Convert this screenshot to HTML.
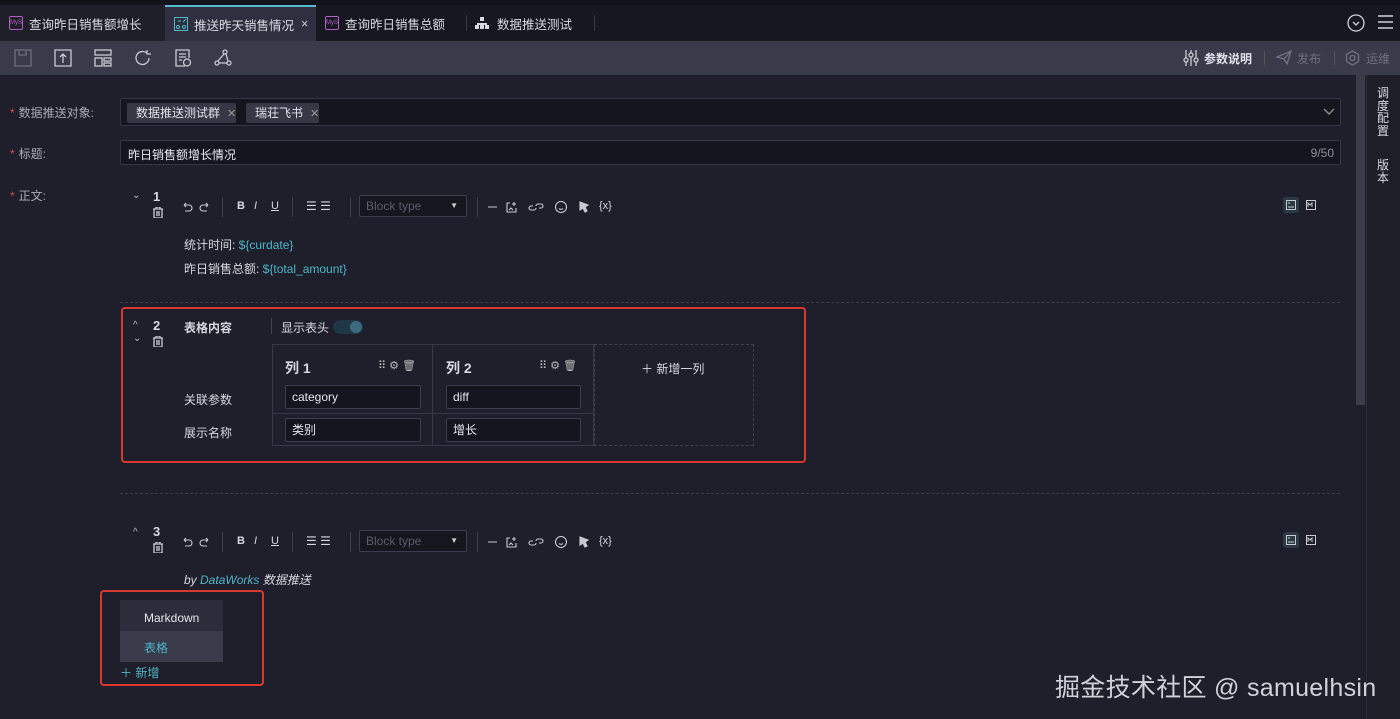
<!DOCTYPE html>
<html><head><meta charset="utf-8"><style>
*{box-sizing:border-box;margin:0;padding:0}
body{width:1400px;height:719px;overflow:hidden;background:#1e1f2b;font-family:"Liberation Sans","Noto Sans CJK SC",sans-serif;color:#d6d8e0;font-size:12px;position:relative}
.a{position:absolute}
.tab{position:absolute;top:5px;height:36px;display:flex;align-items:center;font-size:12.5px;color:#d8dae2;padding-left:9px}
.mys{width:14px;height:14px;border:1px solid #b35dc8;color:#b35dc8;font-size:6px;line-height:12px;text-align:center;margin-right:6px;border-radius:2px}
.lbl{position:absolute;left:10px;color:#a8abb6;font-size:12px}
.lbl b{color:#d9485a;font-weight:normal;margin-right:4px}
.inp{position:absolute;background:#14151d;border:1px solid #33364a;border-radius:2px}
.chip{position:absolute;top:4px;height:20px;background:#363846;color:#e0e2ea;font-size:12px;line-height:20px;padding-left:9px;border-radius:2px}
.chip i{font-style:normal;color:#999;margin-left:7px;font-size:11px}
.icon{position:absolute;stroke:#c8cad2;fill:none;stroke-width:1.3}
.sep{position:absolute;width:1px;height:20px;background:#3c3f4e}
.btype{position:absolute;width:108px;height:22px;border:1px solid #3a3d4e;background:#15161e;color:#5a5d6a;font-size:12px;line-height:20px;padding-left:6px;border-radius:2px}
.cyan{color:#4fb5c8}
.dash{position:absolute;left:120px;width:1220px;border-top:1px dashed #3a3d4b}
.cell{position:absolute;background:#14151d;border:1px solid #3a3d4e;height:24px;line-height:22px;padding-left:6px;color:#e4e6ec;font-size:12px;border-radius:2px}
</style></head><body>
<div class="a" style="left:0;top:0;width:1400px;height:5px;background:#12131a"></div>
<div class="a" style="left:0;top:5px;width:1400px;height:36px;background:#16171f"></div>
<div class="tab" style="left:0;width:165px;background:#1e1f29"><span class="mys">MyS</span>查询昨日销售额增长</div>
<div class="tab" style="left:165px;width:151px;background:#2e3040;border-top:2px solid #5ab8cf"><svg width="14" height="14" style="margin-right:6px" viewBox="0 0 14 14" fill="none" stroke="#4fb5c8"><rect x="0.5" y="0.5" width="13" height="13"/><circle cx="4" cy="10" r="1.5"/><circle cx="10" cy="10" r="1.5"/><path d="M4 4h3M9 5l3-3"/></svg>推送昨天销售情况<span style="margin-left:7px;color:#ccc">×</span></div>
<div class="tab" style="left:316px;width:150px"><span class="mys">MyS</span>查询昨日销售总额</div>
<div class="a" style="left:466px;top:15px;width:1px;height:16px;background:#3a3c48"></div>
<div class="tab" style="left:466px;width:128px"><svg width="14" height="13" style="margin-right:8px" viewBox="0 0 14 13" fill="#d8dae2"><rect x="5" y="0" width="4" height="4"/><rect x="0" y="8" width="4" height="4"/><rect x="5" y="8" width="4" height="4"/><rect x="10" y="8" width="4" height="4"/><path d="M7 4v2M2 6h10v2H2z"/></svg>数据推送测试</div>
<div class="a" style="left:594px;top:15px;width:1px;height:16px;background:#3a3c48"></div>
<svg class="a" style="left:1347px;top:14px" width="18" height="18" viewBox="0 0 18 18" fill="none" stroke="#d0d2da" stroke-width="1.3"><circle cx="9" cy="9" r="8"/><path d="M6 8l3 3 3-3"/></svg>
<svg class="a" style="left:1378px;top:15px" width="15" height="14" viewBox="0 0 15 14" stroke="#d0d2da" stroke-width="1.5"><path d="M0 1h15M0 7h15M0 13h15"/></svg>
<div class="a" style="left:0;top:41px;width:1400px;height:34px;background:#393b4a"></div>
<svg class="icon" style="left:14px;top:49px;stroke:#6c6e7a" width="18" height="18" viewBox="0 0 18 18"><rect x="1" y="1" width="16" height="16"/><path d="M5 1v5h7V1"/></svg>
<svg class="icon" style="left:54px;top:49px" width="18" height="18" viewBox="0 0 18 18"><path d="M1 1h16v16H1z"/><path d="M9 14V5M6 8l3-3 3 3"/></svg>
<svg class="icon" style="left:94px;top:49px" width="18" height="18" viewBox="0 0 18 18"><rect x="1" y="1" width="16" height="5"/><rect x="1" y="9" width="7" height="8"/><rect x="10" y="9" width="7" height="3"/><rect x="10" y="14" width="7" height="3"/></svg>
<svg class="icon" style="left:134px;top:49px" width="18" height="18" viewBox="0 0 18 18"><path d="M15 9a6.5 6.5 0 1 1-2-4.7M13 1v4h4"/></svg>
<svg class="icon" style="left:174px;top:49px" width="18" height="18" viewBox="0 0 18 18"><path d="M11 17H2V1h13v8M5 5h7M5 8h7M5 11h3"/><circle cx="13" cy="13.5" r="3.5"/></svg>
<svg class="icon" style="left:214px;top:49px" width="18" height="18" viewBox="0 0 18 18"><circle cx="11" cy="3" r="2"/><circle cx="3" cy="14" r="2"/><circle cx="15" cy="14" r="2"/><path d="M10 5l-6 7M12 5l2 7M5 14h8"/></svg>
<svg class="icon" style="left:1183px;top:50px" width="16" height="16" viewBox="0 0 16 16"><path d="M3 0v16M8 0v16M13 0v16"/><circle cx="3" cy="10" r="2" fill="#393b4a"/><circle cx="8" cy="5" r="2" fill="#393b4a"/><circle cx="13" cy="10" r="2" fill="#393b4a"/></svg>
<div class="a" style="left:1204px;top:50px;font-size:12px;color:#e0e2ea;font-weight:bold">参数说明</div>
<div class="a" style="left:1264px;top:51px;width:1px;height:14px;background:#555"></div>
<svg class="icon" style="left:1276px;top:50px;stroke:#70737f" width="16" height="15" viewBox="0 0 16 15"><path d="M1 7l14-6-4 13-3-5zM8 9l7-8"/></svg>
<div class="a" style="left:1297px;top:50px;color:#6e717d;font-size:12px">发布</div>
<div class="a" style="left:1334px;top:51px;width:1px;height:14px;background:#555"></div>
<svg class="icon" style="left:1345px;top:50px;stroke:#70737f" width="15" height="16" viewBox="0 0 15 16"><path d="M7.5 1l6 3.5v7l-6 3.5-6-3.5v-7z"/><circle cx="7.5" cy="8" r="2.5"/></svg>
<div class="a" style="left:1366px;top:50px;color:#6e717d;font-size:12px">运维</div>
<div class="a" style="left:1366px;top:75px;width:34px;height:644px;background:#1d1e28;border-left:1px solid #2a2c38"></div>
<div class="a" style="left:1377px;top:87px;width:14px;font-size:12px;line-height:12.5px;color:#d8dae2">调度配置</div>
<div class="a" style="left:1377px;top:159px;width:14px;font-size:12px;line-height:12.5px;color:#d8dae2">版本</div>
<div class="a" style="left:1356px;top:75px;width:9px;height:330px;background:#3a3c4a"></div>
<div class="lbl" style="top:104px"><b>*</b>数据推送对象:</div>
<div class="inp" style="left:120px;top:98px;width:1221px;height:28px"><div class="chip" style="left:6px">数据推送测试群<i>✕</i></div><div class="chip" style="left:125px">瑞荘飞书<i>✕</i></div>
<svg class="a" style="left:1202px;top:9px" width="12" height="8" viewBox="0 0 12 8" fill="none" stroke="#888" stroke-width="1.5"><path d="M1 1l5 5 5-5"/></svg></div>
<div class="lbl" style="top:145px"><b>*</b>标题:</div>
<div class="inp" style="left:120px;top:140px;width:1221px;height:25px"><span class="a" style="left:7px;top:5px;color:#e8eaf0;font-size:12px">昨日销售额增长情况</span><span class="a" style="right:6px;top:5px;color:#8c8f9a;font-size:12px">9/50</span></div>
<div class="lbl" style="top:187px"><b>*</b>正文:</div>
<div class="a" style="left:132px;top:190px;color:#bbb;font-size:10px">⌄</div>
<div class="a" style="left:153px;top:189px;font-weight:bold;font-size:13px">1</div>
<svg class="icon" style="left:153px;top:207px" width="10" height="11" viewBox="0 0 10 11"><path d="M0 2h10M3 2V0h4v2M1 2v9h8V2M4 4v5M6 4v5"/></svg>
<div id="tb1"></div>
<div class="a" style="left:184px;top:236px;font-size:12px">统计时间: <span class="cyan">${curdate}</span></div>
<div class="a" style="left:184px;top:260px;font-size:12px">昨日销售总额: <span class="cyan">${total_amount}</span></div>
<div class="a" style="left:1283px;top:197px;width:16px;height:16px;background:#2b3a44;border-radius:3px"></div>
<svg class="icon" style="left:1286px;top:200px;stroke-width:1" width="10" height="10" viewBox="0 0 10 10"><rect x=".5" y=".5" width="9" height="9"/><path d="M2 7h6M2 3h2"/></svg>
<svg class="icon" style="left:1306px;top:200px;stroke-width:1" width="10" height="10" viewBox="0 0 10 10"><rect x=".5" y=".5" width="9" height="9"/><path d="M2 7V3l2 2 2-2v4"/></svg>
<div class="dash" style="top:302px"></div>
<div class="a" style="left:121px;top:307px;width:685px;height:156px;border:2px solid #d9382e;border-radius:4px"></div>
<div class="a" style="left:133px;top:320px;color:#bbb;font-size:10px">^</div>
<div class="a" style="left:133px;top:333px;color:#bbb;font-size:10px">⌄</div>
<div class="a" style="left:153px;top:318px;font-weight:bold;font-size:13px">2</div>
<svg class="icon" style="left:153px;top:336px" width="10" height="11" viewBox="0 0 10 11"><path d="M0 2h10M3 2V0h4v2M1 2v9h8V2M4 4v5M6 4v5"/></svg>
<div class="a" style="left:184px;top:319px;font-weight:bold">表格内容</div>
<div class="a" style="left:271px;top:318px;width:1px;height:16px;background:#444"></div>
<div class="a" style="left:281px;top:319px">显示表头</div>
<div class="a" style="left:333px;top:320px;width:30px;height:14px;border-radius:7px;background:#1f3644"></div>
<div class="a" style="left:350px;top:321px;width:12px;height:12px;border-radius:6px;background:#3b6a80"></div>
<div class="a" style="left:272px;top:344px;width:322px;height:102px;border:1px solid #363948"></div>
<div class="a" style="left:432px;top:344px;width:1px;height:102px;background:#363948"></div>
<div class="a" style="left:272px;top:413px;width:322px;height:1px;background:#363948"></div>
<div class="a" style="left:594px;top:344px;width:160px;height:102px;border:1px dashed #3e4150"></div>
<div class="a" style="left:285px;top:358px;font-size:14px;font-weight:bold">列 1</div>
<div class="a" style="left:446px;top:358px;font-size:14px;font-weight:bold">列 2</div>
<div class="a" style="left:378px;top:359px;color:#bbb;font-size:11px">⠿ ⚙ 🗑</div>
<div class="a" style="left:539px;top:359px;color:#bbb;font-size:11px">⠿ ⚙ 🗑</div>
<div class="a" style="left:641px;top:360px;font-size:12px">＋ 新增一列</div>
<div class="a" style="left:184px;top:391px">关联参数</div>
<div class="a" style="left:184px;top:424px">展示名称</div>
<div class="cell" style="left:285px;top:385px;width:136px">category</div>
<div class="cell" style="left:446px;top:385px;width:135px">diff</div>
<div class="cell" style="left:285px;top:418px;width:136px">类别</div>
<div class="cell" style="left:446px;top:418px;width:135px">增长</div>
<div class="dash" style="top:493px"></div>
<div class="a" style="left:133px;top:527px;color:#bbb;font-size:10px">^</div>
<div class="a" style="left:153px;top:524px;font-weight:bold;font-size:13px">3</div>
<svg class="icon" style="left:153px;top:542px" width="10" height="11" viewBox="0 0 10 11"><path d="M0 2h10M3 2V0h4v2M1 2v9h8V2M4 4v5M6 4v5"/></svg>
<div id="tb2"></div>
<div class="a" style="left:1283px;top:532px;width:16px;height:16px;background:#2b3a44;border-radius:3px"></div>
<svg class="icon" style="left:1286px;top:535px;stroke-width:1" width="10" height="10" viewBox="0 0 10 10"><rect x=".5" y=".5" width="9" height="9"/><path d="M2 7h6M2 3h2"/></svg>
<svg class="icon" style="left:1306px;top:535px;stroke-width:1" width="10" height="10" viewBox="0 0 10 10"><rect x=".5" y=".5" width="9" height="9"/><path d="M2 7V3l2 2 2-2v4"/></svg>
<div class="a" style="left:184px;top:571px;font-style:italic">by <span class="cyan">DataWorks</span> 数据推送</div>
<div class="a" style="left:100px;top:590px;width:164px;height:96px;border:2px solid #d9382e;border-radius:4px"></div>
<div class="a" style="left:120px;top:600px;width:103px;height:62px;background:#2b2d3a"></div>
<div class="a" style="left:120px;top:631px;width:103px;height:31px;background:#393b4b"></div>
<div class="a" style="left:144px;top:611px;color:#e4e6ec">Markdown</div>
<div class="a" style="left:144px;top:639px"><span class="cyan">表格</span></div>
<div class="a cyan" style="left:120px;top:664px;font-size:12px">＋ 新增</div>
<div class="a" style="left:1055px;top:668px;font-size:25px;color:#d0d2da;letter-spacing:0.3px">掘金技术社区 @ samuelhsin</div>
<script>
function tb(y){return `
<svg class="icon" style="left:182px;top:${y+1}px;stroke-width:1.1" width="28" height="10" viewBox="0 0 28 10"><path d="M2 3h5a3 3 0 0 1 0 6H3M2 3l2-2M2 3l2 2M26 3h-5a3 3 0 0 0 0 6h4M26 3l-2-2M26 3l-2 2"/></svg>
<div class="sep" style="left:222px;top:${y-4}px"></div>
<div class="a" style="left:237px;top:${y-1}px;font-size:11px;font-weight:bold">B</div>
<div class="a" style="left:254px;top:${y-1}px;font-size:11px;font-style:italic">I</div>
<div class="a" style="left:271px;top:${y-1}px;font-size:11px;text-decoration:underline">U</div>
<div class="sep" style="left:292px;top:${y-4}px"></div>
<div class="a" style="left:306px;top:${y-2}px;font-size:12px">☰ ☰</div>
<div class="sep" style="left:350px;top:${y-4}px"></div>
<div class="btype" style="left:359px;top:${y-6}px">Block type<span class="a" style="right:8px;top:0;color:#ccc;font-size:8px">▼</span></div>
<div class="sep" style="left:477px;top:${y-4}px"></div>
<svg class="icon" style="left:486px;top:${y}px;stroke-width:1.1" width="130" height="12" viewBox="0 0 130 12"><path d="M2 6h9M24 2h-3v9h9V7M28 1v4M26 3h4M23 9l2-2 2 2M47 5h-2a2 2 0 0 0 0 4h3a2 2 0 0 0 2-2M53 7h2a2 2 0 0 0 0-4h-3a2 2 0 0 0-2 2"/><circle cx="75" cy="6" r="5.5"/><path d="M73 7.5a2.5 2 0 0 0 4 0"/><path d="M94 1l8 3-3 2 2 4-2 1-2-4-3 2z" fill="#c8cad2"/></svg>
<div class="a" style="left:599px;top:${y-1}px;font-size:11px">{x}</div>`}
document.getElementById('tb1').outerHTML=tb(201);
document.getElementById('tb2').outerHTML=tb(536);
</script>
</body></html>
